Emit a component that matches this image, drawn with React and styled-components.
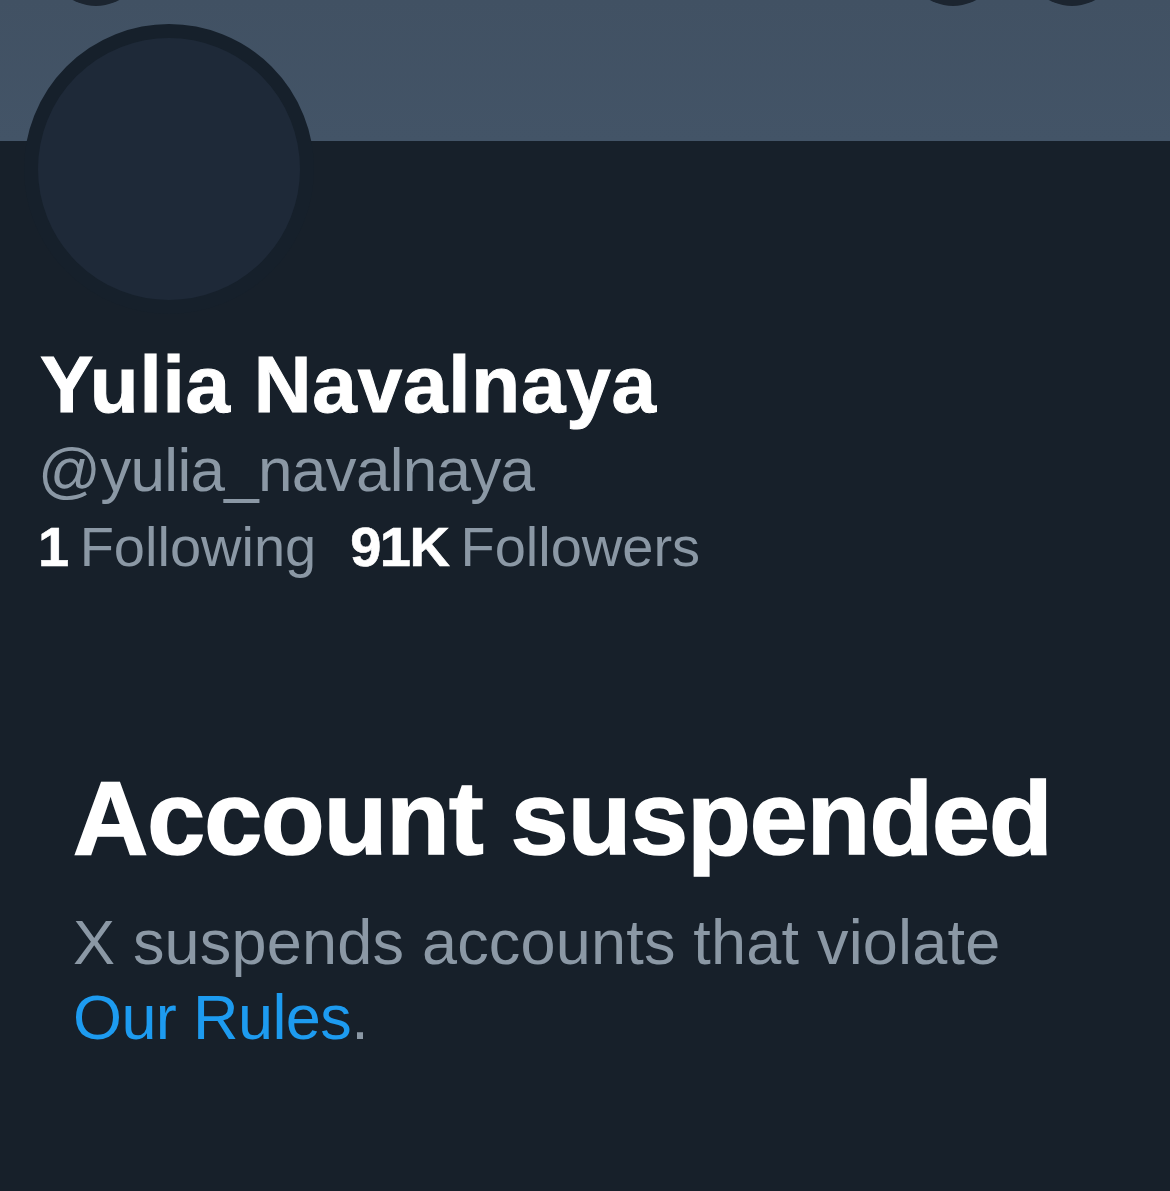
import styled, { createGlobalStyle } from "styled-components"

const GlobalStyle = createGlobalStyle`
  html, body {
    margin: 0;
    background: #17202a;
  }
  body {
    font-family: "Liberation Sans", Arial, sans-serif;
    -webkit-font-smoothing: antialiased;
  }
`

// Whole screen
const Page = styled.div`
  width: 1170px;
  min-height: 1191px;
  background: #17202a;
  overflow: hidden;
`

// Grey header banner at the top
const Banner = styled.div`
  position: relative;
  height: 141px;
  background: linear-gradient(180deg, #415163 0%, #435467 100%);
`

// Round nav buttons cut off by the top of the screen
const NavButton = styled.span`
  position: absolute;
  top: -90px;
  left: ${p => p.$x}px;
  width: 96px;
  height: 96px;
  border-radius: 50%;
  background: #1c2530;
`

// Empty avatar, overlapping the banner
const Avatar = styled.div`
  position: relative;
  width: 262px;
  height: 262px;
  margin: -117px 0 0 24px;
  border-radius: 50%;
  border: 14px solid #16202b;
  background: #1e2938;
`

const ProfileInfo = styled.div`
  display: flex;
  flex-direction: column;
  padding: 0 38px;
  margin-top: 23px;
`

const Name = styled.h1`
  margin: 0 0 0 2px;
  font-size: 80px;
  line-height: 96px;
  font-weight: 700;
  letter-spacing: 0.8px;
  -webkit-text-stroke: 1px #ffffff;
  color: #ffffff;
`

const Handle = styled.div`
  font-size: 62px;
  line-height: 74px;
  letter-spacing: -0.7px;
  color: #8b98a5;
`

const StatsRow = styled.div`
  display: flex;
  gap: 34px;
  margin-top: 5px;
  font-size: 56px;
  line-height: 70px;
`

const Stat = styled.span`
  color: #8b98a5;
  white-space: nowrap;
  b {
    color: #ffffff;
    font-weight: 700;
    margin-right: 12px;
    letter-spacing: -1.5px;
    -webkit-text-stroke: 0.6px #ffffff;
  }
`

// "Account suspended" notice
const Notice = styled.section`
  padding: 0 73px;
  margin-top: 176px;
`

const NoticeTitle = styled.h2`
  margin: 0;
  font-size: 104px;
  line-height: 120px;
  font-weight: 700;
  letter-spacing: -0.9px;
  -webkit-text-stroke: 1.6px #ffffff;
  color: #ffffff;
`

const NoticeText = styled.p`
  margin: 27px 0 0;
  font-size: 63px;
  line-height: 75px;
  letter-spacing: 0.2px;
  color: #8b98a5;
  a {
    color: #1d9bf0;
    text-decoration: none;
    letter-spacing: -0.6px;
  }
`

const App = () => {
  return (
    <Page>
      <GlobalStyle />
      <Banner>
        <NavButton $x={48} />
        <NavButton $x={905} />
        <NavButton $x={1024} />
      </Banner>
      <Avatar />
      <ProfileInfo>
        <Name>Yulia Navalnaya</Name>
        <Handle>@yulia_navalnaya</Handle>
        <StatsRow>
          <Stat><b>1</b>Following</Stat>
          <Stat><b>91K</b>Followers</Stat>
        </StatsRow>
      </ProfileInfo>
      <Notice>
        <NoticeTitle>Account suspended</NoticeTitle>
        <NoticeText>
          X suspends accounts that violate
          <br />
          <a href="#rules">Our Rules</a>.
        </NoticeText>
      </Notice>
    </Page>
  )
}

export default App
